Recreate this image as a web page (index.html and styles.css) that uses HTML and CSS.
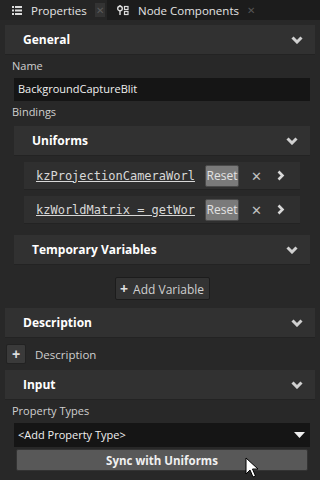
FILE: index.html
```html
<!DOCTYPE html>
<html lang="en">
<head>
    <meta charset="UTF-8">
    <title>Properties</title>
    <link rel="stylesheet" href="styles.css">
</head>
<body>
    <div class="tabs">
        <div class="tab active">
            <svg class="tab-icon" width="10" height="9" viewBox="0 0 10 9">
                <rect x="0" y="0" width="2" height="2" fill="#ddd"/>
                <rect x="3" y="0" width="7" height="2" fill="#ddd"/>
                <rect x="0" y="3.5" width="2" height="2" fill="#ddd"/>
                <rect x="3" y="3.5" width="7" height="2" fill="#ddd"/>
                <rect x="0" y="7" width="2" height="2" fill="#ddd"/>
                <rect x="3" y="7" width="7" height="2" fill="#ddd"/>
            </svg>
            <span class="tab-label">Properties</span>
            <span class="tab-close dim">✕</span>
        </div>
        <div class="tab">
            <svg class="tab-icon" width="12" height="11" viewBox="0 0 12 11">
                <circle cx="3" cy="3.5" r="2.3" fill="none" stroke="#ddd" stroke-width="1.4"/>
                <line x1="3" y1="0" x2="3" y2="1" stroke="#ddd" stroke-width="1.4"/>
                <line x1="3" y1="6" x2="3" y2="10" stroke="#ddd" stroke-width="1.4"/>
                <rect x="7.5" y="1.5" width="3.5" height="3" fill="none" stroke="#ddd" stroke-width="1.2"/>
                <rect x="7.5" y="6.5" width="3.5" height="3" fill="none" stroke="#ddd" stroke-width="1.2"/>
            </svg>
            <span class="tab-label">Node Components</span>
            <span class="tab-close">✕</span>
        </div>
    </div>

    <div class="section-header">
        <span>General</span>
        <svg class="chevron" width="12" height="8" viewBox="0 0 12 8"><polyline points="1.5,1.5 6,6 10.5,1.5" fill="none" stroke="#d0d0d0" stroke-width="3"/></svg>
    </div>

    <div class="field-label">Name</div>
    <div class="text-input">BackgroundCaptureBlit</div>

    <div class="field-label">Bindings</div>
    <div class="section-header sub">
        <span>Uniforms</span>
        <svg class="chevron" width="12" height="8" viewBox="0 0 12 8"><polyline points="1.5,1.5 6,6 10.5,1.5" fill="none" stroke="#d0d0d0" stroke-width="3"/></svg>
    </div>

    <div class="uniform-row">
        <span class="expr">kzProjectionCameraWorl</span>
        <button class="reset-btn">Reset</button>
        <span class="remove">✕</span>
        <svg class="go" width="8" height="11" viewBox="0 0 8 11"><polyline points="1.5,1.5 5.5,5.5 1.5,9.5" fill="none" stroke="#d8d8d8" stroke-width="2.6"/></svg>
    </div>
    <div class="uniform-row">
        <span class="expr">kzWorldMatrix = getWor</span>
        <button class="reset-btn">Reset</button>
        <span class="remove">✕</span>
        <svg class="go" width="8" height="11" viewBox="0 0 8 11"><polyline points="1.5,1.5 5.5,5.5 1.5,9.5" fill="none" stroke="#d8d8d8" stroke-width="2.6"/></svg>
    </div>

    <div class="section-header sub temp">
        <span>Temporary Variables</span>
        <svg class="chevron" width="12" height="8" viewBox="0 0 12 8"><polyline points="1.5,1.5 6,6 10.5,1.5" fill="none" stroke="#d0d0d0" stroke-width="3"/></svg>
    </div>

    <div class="add-row">
        <button class="add-btn"><span class="plus">+</span> Add Variable</button>
    </div>

    <div class="section-header desc">
        <span>Description</span>
        <svg class="chevron" width="12" height="8" viewBox="0 0 12 8"><polyline points="1.5,1.5 6,6 10.5,1.5" fill="none" stroke="#d0d0d0" stroke-width="3"/></svg>
    </div>

    <div class="desc-row">
        <button class="square-btn">+</button>
        <span class="desc-label">Description</span>
    </div>

    <div class="section-header input-head">
        <span>Input</span>
        <svg class="chevron" width="12" height="8" viewBox="0 0 12 8"><polyline points="1.5,1.5 6,6 10.5,1.5" fill="none" stroke="#d0d0d0" stroke-width="3"/></svg>
    </div>

    <div class="field-label">Property Types</div>
    <div class="text-input dropdown">
        <span>&lt;Add Property Type&gt;</span>
        <svg width="11" height="6" viewBox="0 0 11 6"><polygon points="0,0 11,0 5.5,6" fill="#eee"/></svg>
    </div>
    <button class="sync-btn">Sync with Uniforms</button>

    <svg class="cursor" width="14" height="22" viewBox="0 0 14 22">
        <path d="M1 1 L1 17 L5 13 L8 20 L10.5 19 L7.5 12 L13 12 Z" fill="#fff" stroke="#000" stroke-width="1"/>
    </svg>
</body>
</html>
```

FILE: styles.css
```css
* {
    margin: 0;
    padding: 0;
    box-sizing: border-box;
}

body {
    font-family: 'Open Sans', 'Noto Sans', sans-serif;
    font-size: 11px;
    background: #282828;
    color: #d4d4d4;
    width: 320px;
    height: 480px;
    overflow: hidden;
    position: relative;
}

.tabs {
    display: flex;
    height: 20px;
    background: #1c1c1c;
}

.tab {
    display: flex;
    align-items: center;
    padding: 0 10px 0 12px;
    height: 20px;
    white-space: nowrap;
}

.tab.active {
    background: #252525;
    width: 107px;
    padding-right: 0;
}

.tab + .tab {
    padding-left: 10px;
}

.tab-icon {
    flex-shrink: 0;
    margin-right: 9px;
}

.tab-label {
    color: #e4e4e4;
    font-size: 11.5px;
}

.tab-close {
    color: #555;
    font-size: 10px;
    margin-left: 8px;
}

.tab-close.dim {
    background: #333;
    color: #5a5a5a;
    padding: 0 1px;
}

.section-header {
    display: flex;
    align-items: center;
    justify-content: space-between;
    height: 30px;
    margin: 5px 5px 0;
    padding: 0 12px 0 18px;
    background: #313131;
    border-bottom: 1px solid #232323;
    font-size: 12px;
    font-weight: bold;
    color: #fff;
}

.section-header.sub {
    margin: 4px 10px 0 14px;
    padding-left: 18px;
}

.section-header.temp {
    margin-top: 11px;
}

.section-header.desc {
    margin-top: 8px;
}

.section-header.input-head {
    margin-top: 6px;
}

.field-label {
    padding: 3px 0 0 12px;
    height: 21px;
    font-size: 11px;
    color: #cfcfcf;
}

.text-input {
    margin: 2px 10px 0 14px;
    height: 23px;
    background: #151515;
    color: #f0f0f0;
    padding: 0 4px;
    font-size: 11px;
    line-height: 22px;
}

.dropdown {
    display: flex;
    justify-content: space-between;
    align-items: center;
    height: 24px;
    margin-top: 2px;
    padding-right: 5px;
}

.uniform-row {
    display: flex;
    align-items: center;
    height: 28px;
    margin: 6px 20px 0 24px;
    background: #2f2f2f;
    border-bottom: 1px solid #232323;
    padding-left: 12px;
}

.expr {
    font-family: 'DejaVu Sans Mono', monospace;
    font-size: 12px;
    color: #d8d8d8;
    text-decoration: underline;
    width: 160px;
    flex-shrink: 0;
    overflow: hidden;
    white-space: nowrap;
}

.reset-btn {
    font-family: inherit;
    font-size: 12px;
    width: 34px;
    height: 22px;
    margin-left: 9px;
    background: #7a7a7a;
    color: #e2e2e2;
    border: 1px solid #4a4a4a;
    border-radius: 2px;
}

.remove {
    color: #c0c0c0;
    font-size: 13px;
    margin-left: 12px;
}

.go {
    margin-left: 15px;
}

.add-row {
    display: flex;
    justify-content: center;
    padding: 12px 0 0 4px;
}

.add-btn {
    font-family: inherit;
    font-size: 12px;
    height: 23px;
    width: 95px;
    background: #333;
    color: #d0d0d0;
    border: 1px solid #1c1c1c;
    border-radius: 2px;
}

.plus {
    font-size: 14px;
    font-weight: bold;
    color: #e0e0e0;
    margin-right: 2px;
}

.desc-row {
    display: flex;
    align-items: center;
    margin-top: 6px;
    padding-left: 6px;
    height: 20px;
}

.square-btn {
    width: 20px;
    height: 20px;
    background: #3a3a3a;
    color: #ddd;
    border: 1px solid #222;
    border-radius: 2px;
    font-size: 14px;
    font-weight: bold;
    line-height: 16px;
}

.desc-label {
    margin-left: 9px;
    font-size: 11.5px;
    color: #cfcfcf;
}

.sync-btn {
    display: block;
    font-family: inherit;
    font-size: 11.5px;
    font-weight: bold;
    width: 292px;
    height: 22px;
    margin: 2px 0 0 16px;
    background: #585858;
    color: #f0f0f0;
    border: 1px solid #333;
    border-radius: 2px;
}

.cursor {
    position: absolute;
    left: 245px;
    top: 457px;
}
```
